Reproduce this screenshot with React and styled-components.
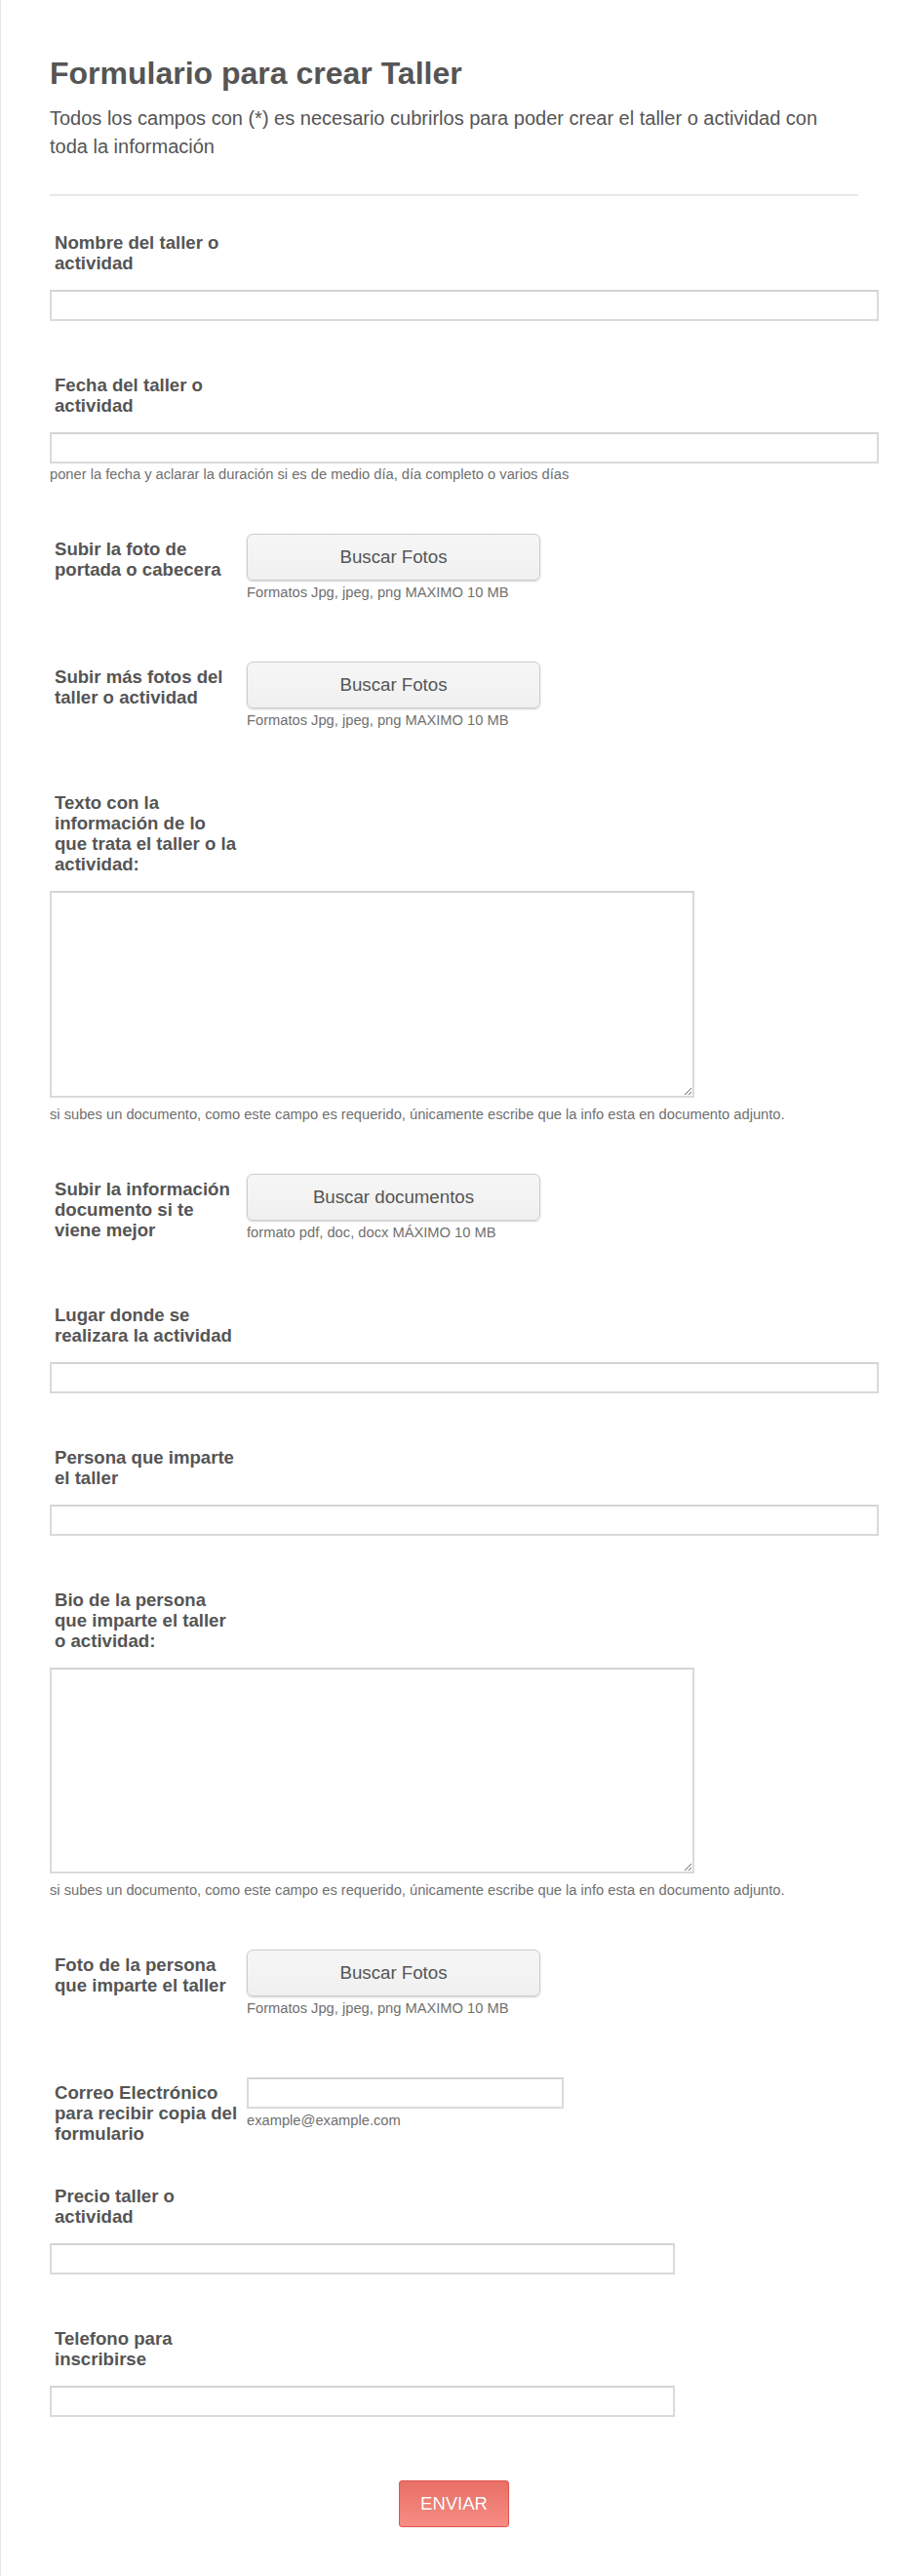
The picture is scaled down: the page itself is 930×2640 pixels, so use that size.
import React from 'react';
import styled, { createGlobalStyle } from 'styled-components';

const GlobalStyle = createGlobalStyle`
  * { box-sizing: border-box; }
  body {
    margin: 0;
    background: #fff;
    font-family: "Liberation Sans", Arial, sans-serif;
    color: #555;
  }
`

const Page = styled.div`
  width: 930px;
  min-height: 2640px;
  border-left: 1px solid #e6e6e6;
  padding: 56px 50px 0 50px;
`

const Title = styled.h1`
  margin: 0;
  font-size: 32px;
  line-height: 38px;
  font-weight: bold;
  color: #555;
`

const Subtitle = styled.p`
  margin: 13px 0 0;
  font-size: 20px;
  line-height: 29px;
  color: #555;
`

const Divider = styled.div`
  margin-top: 34px;
  height: 2px;
  background: #e8e8e8;
  margin-bottom: 7px;
`

const Field = styled.div`
  display: flex;
  flex-direction: ${p => (p.$side ? 'row' : 'column')};
  align-items: flex-start;
  padding-top: ${p => (p.$side ? 27 : 30)}px;
  padding-bottom: ${p => (p.$pb != null ? p.$pb : p.$side ? 28 : 25)}px;
`

const Label = styled.label`
  display: block;
  width: 202px;
  flex-shrink: 0;
  padding: ${p => (p.$side ? '5px' : '0')} 7px 0 5px;
  margin-bottom: ${p => (p.$side ? '0' : '17px')};
  font-size: 18.6px;
  line-height: 21px;
  font-weight: bold;
  color: #555;
`

const Control = styled.div`
  display: flex;
  flex-direction: column;
  margin-bottom: ${p => (p.$upload ? '7px' : '0')};
`

const TextInput = styled.input`
  display: block;
  width: ${p => p.$w}px;
  height: 32px;
  border: 2px solid #dadada;
  border-top-color: #d4d4d4;
  background: #fff;
  font-family: inherit;
  font-size: 16px;
  padding: 4px 8px;
  outline: none;
`

const TextArea = styled.textarea`
  display: block;
  width: 661px;
  height: ${p => p.$h}px;
  border: 2px solid #dadada;
  border-top-color: #d4d4d4;
  background: #fff;
  font-family: inherit;
  font-size: 16px;
  outline: none;
  resize: both;
`

const UploadButton = styled.button`
  width: 301px;
  height: 48px;
  border: 1px solid #cdcdcd;
  border-radius: 6px;
  background: linear-gradient(#f6f6f6, #f0f0f0);
  box-shadow: 0 1px 2px rgba(0, 0, 0, 0.18);
  font-family: inherit;
  font-size: 18.7px;
  color: #555;
  cursor: pointer;
`

const Hint = styled.span`
  display: block;
  margin-top: ${p => (p.$after === 'textarea' ? '9px' : p.$after === 'input' ? '3px' : '4px')};
  font-size: 14.7px;
  line-height: 17px;
  color: #707070;
  white-space: nowrap;
`

const SubmitRow = styled.div`
  display: flex;
  justify-content: center;
  padding-top: 40px;
`

const SubmitButton = styled.button`
  width: 113px;
  height: 48px;
  border: 1px solid #e0564c;
  border-radius: 3px;
  background: linear-gradient(#e86f66, #f78d83);
  color: #fff;
  font-family: inherit;
  font-size: 18.5px;
  text-shadow: 0 0 1px rgba(0, 0, 0, 0.15);
  cursor: pointer;
`

const TopField = ({ label, children }) => (
  <Field>
    <Label>{label}</Label>
    {children}
  </Field>
)

const UploadField = ({ label, text, hint }) => (
  <Field $side>
    <Label $side>{label}</Label>
    <Control $upload>
      <UploadButton type="button">{text}</UploadButton>
      <Hint>{hint}</Hint>
    </Control>
  </Field>
)

const fotosHint = 'Formatos Jpg, jpeg, png MAXIMO 10 MB'
const docHint = 'si subes un documento, como este campo es requerido, únicamente escribe que la info esta en documento adjunto.'

const App = () => {
  return (
    <Page>
      <GlobalStyle />
      <Title>Formulario para crear Taller</Title>
      <Subtitle>
        Todos los campos con (*) es necesario cubrirlos para poder crear el taller o actividad con toda la información
      </Subtitle>
      <Divider />

      <TopField label="Nombre del taller o actividad">
        <TextInput $w={850} />
      </TopField>

      <TopField label="Fecha del taller o actividad">
        <TextInput $w={850} />
        <Hint $after="input">poner la fecha y aclarar la duración si es de medio día, día completo o varios días</Hint>
      </TopField>

      <UploadField label="Subir la foto de portada o cabecera" text="Buscar Fotos" hint={fotosHint} />
      <UploadField label="Subir más fotos del taller o actividad" text="Buscar Fotos" hint={fotosHint} />

      <TopField label="Texto con la información de lo que trata el taller o la actividad:">
        <TextArea $h={212} />
        <Hint $after="textarea">{docHint}</Hint>
      </TopField>

      <UploadField
        label="Subir la información documento si te viene mejor"
        text="Buscar documentos"
        hint="formato pdf, doc, docx MÁXIMO 10 MB"
      />

      <TopField label="Lugar donde se realizara la actividad">
        <TextInput $w={850} />
      </TopField>

      <TopField label="Persona que imparte el taller">
        <TextInput $w={850} />
      </TopField>

      <TopField label="Bio de la persona que imparte el taller o actividad:">
        <TextArea $h={211} />
        <Hint $after="textarea">{docHint}</Hint>
      </TopField>

      <UploadField label="Foto de la persona que imparte el taller" text="Buscar Fotos" hint={fotosHint} />

      <Field $side $pb={13}>
        <Label $side>Correo Electrónico para recibir copia del formulario</Label>
        <Control>
          <TextInput type="email" $w={325} />
          <Hint>example@example.com</Hint>
        </Control>
      </Field>

      <TopField label="Precio taller o actividad">
        <TextInput $w={641} />
      </TopField>

      <TopField label="Telefono para inscribirse">
        <TextInput $w={641} />
      </TopField>

      <SubmitRow>
        <SubmitButton type="submit">ENVIAR</SubmitButton>
      </SubmitRow>
    </Page>
  );
}

export default App;
